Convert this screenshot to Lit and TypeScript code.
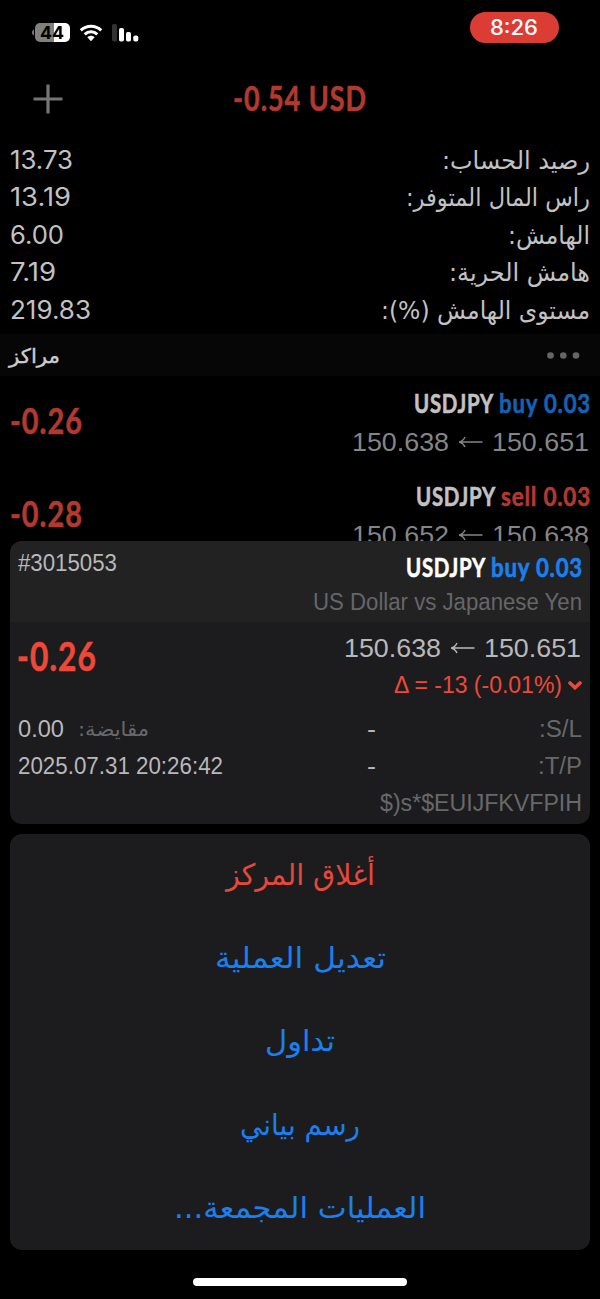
import { LitElement, html, css, svg } from "lit";
import { customElement, property } from "lit/decorators.js";

/** One line of text whose glyphs are condensed or widened to fill `w` pixels. */
@customElement("fit-text")
class FitText extends LitElement {
  @property({ type: Number }) w = 0;
  @property() text = "";

  static styles = css`
    :host { display: block; flex: none; direction: ltr; text-align: left; white-space: nowrap; }
    .ink { display: inline-block; transform-origin: 0 50%; vertical-align: top; }
  `;

  updated() {
    const ink = this.renderRoot.querySelector(".ink") as HTMLElement;
    this.style.width = `${this.w}px`;
    const fit = () => {
      ink.style.transform = "none";
      const natural = ink.getBoundingClientRect().width;
      if (natural) ink.style.transform = `scaleX(${this.w / natural})`;
    };
    fit();
    document.fonts?.ready.then(fit);
  }

  render() {
    const rtl = /[\u0600-\u06ff]/.test(this.text);
    return html`<span class="ink" dir=${rtl ? "rtl" : "ltr"}>${this.text}</span>`;
  }
}

const t = (cls: string, w: number, text: string) =>
  html`<fit-text class=${cls} .w=${w} .text=${text}></fit-text>`;

const arrow = html`<svg class="arrow" width="25" height="12" viewBox="0 0 25 12">
  ${svg`<path d="M24.500 6H1.5M7 1C5.8 3.6 4 5.3 1.2 6C4 6.7 5.8 8.4 7 11" fill="none" stroke="currentColor" stroke-width="1.4"/>`}
</svg>`;

const summary: [string, number, string, number][] = [
  ["13.73", 63, "رصيد الحساب:", 148],
  ["13.19", 61, "راس المال المتوفر:", 184],
  ["6.00", 54, "الهامش:", 82],
  ["7.19", 46, "هامش الحرية:", 141],
  ["219.83", 81, "مستوى الهامش (%):", 209],
];

const positions = [
  { profit: "-0.26", side: "buy", sideW: 92, from: "150.651", to: "150.638" },
  { profit: "-0.28", side: "sell", sideW: 90, from: "150.638", to: "150.652" },
];

const actions: [string, number, string][] = [
  ["أغلاق المركز", 149, "danger"],
  ["تعديل العملية", 171, ""],
  ["تداول", 70, ""],
  ["رسم بياني", 120, ""],
  ["العمليات المجمعة...", 252, ""],
];

@customElement("app-root")
class AppRoot extends LitElement {
  static styles = css`
    :host {
      display: flex; flex-direction: column; width: 600px; height: 1299px; overflow: hidden;
      background: #000; color: #c2c2c2;
      font-family: "Liberation Sans", "DejaVu Sans", sans-serif;
    }
    * { box-sizing: border-box; }
    svg { display: block; flex: none; }
    .status { display: flex; justify-content: space-between; align-items: flex-start; height: 56px; padding: 0 41.5px 0 32px; }
    .indicators { display: flex; align-items: center; padding-top: 23px; }
    .wifi { margin-left: 9px; }
    .signal { margin-left: 9px; }
    .battery { font: 700 18px "Inter", sans-serif; }
    .clock { display: flex; align-items: center; justify-content: center; margin-top: 12px; width: 88.5px; height: 31px; border-radius: 16px; background: #db3d35; color: #fff; }
    .time { font: 500 21px/31px "Inter", sans-serif; }
    .title { display: grid; grid-template-columns: 1fr auto 1fr; align-items: center; height: 86px; padding: 0 33px 4px; }
    .plus { padding-top: 4px; }
    .cond { font-family: "Lato", sans-serif; font-weight: 700; letter-spacing: .035em; -webkit-text-stroke: .6px currentColor; }
    .total { font-size: 35px; line-height: 48px; color: #b3392f; }
    .summary { height: 192px; padding: 0 10px; }
    .line { display: flex; justify-content: space-between; height: 37.4px; }
    .num { font: 400 25px/37.8px "Inter", sans-serif; }
    .ar { font-family: "DejaVu Sans", sans-serif; font-size: 24.5px; line-height: 37.4px; }
    .strip { display: flex; justify-content: space-between; align-items: center; height: 42px; padding: 0 20px 0 9px; background: #060606; color: #ccc; }
    .strip svg { margin-top: 2px; }
    .section { margin-top: 3px; font-size: 20px; -webkit-text-stroke: .4px currentColor; }
    .list { height: 165px; }
    .position { display: flex; justify-content: space-between; height: 92.7px; padding: 0 10px; }
    .profit { margin-top: 24px; font-size: 37px; line-height: 40px; color: #b3392f; }
    .right { display: flex; flex-direction: column; align-items: flex-end; }
    .position .right { padding-top: 6px; }
    .pair { display: flex; gap: 5px; margin-right: -1px; font-size: 26px; line-height: 42px; }
    .position .pair { height: 40px; }
    .buy { color: #1562b5; }
    .sell { color: #b3392f; }
    .prices { display: flex; align-items: center; gap: 9px; font-size: 26px; line-height: 40px; color: #858585; }
    .position .prices { padding-right: 1px; }
    .card { position: relative; margin: 0 10px; height: 283px; flex: none; border-radius: 12px; background: #1c1c1e; overflow: hidden; color: #b8b8ba; font-size: 23px; }
    .head { display: flex; justify-content: space-between; height: 81px; padding: 8px 8px 0; background: #222223; }
    .head .pair { height: 36px; line-height: 37px; color: #fff; }
    .card .buy { color: #1a80f0; }
    .ticket { line-height: 29px; }
    .desc { line-height: 34px; color: #666668; }
    .body { display: grid; grid-template-columns: 1fr auto; padding: 7.5px 8px 0; line-height: 37px; }
    .card .profit { margin: 6px 0 0 -1px; height: 40px; font-size: 40px; color: #ee4938; }
    .card .prices { line-height: 37px; color: #b8b8ba; padding-right: 1px; }
    .delta { display: flex; align-items: center; gap: 6px; color: #ee4938; }
    .facts { grid-column: 1 / 3; display: grid; grid-template-columns: 349px 1fr; padding-top: 7.5px; }
    .cell { display: flex; align-items: center; height: 37px; }
    .cell.end { justify-content: space-between; }
    .cell.only { grid-column: 1 / 3; justify-content: flex-end; }
    .swap { margin-left: 14px; font-size: 20px; line-height: 37px; }
    .muted { color: #68686a; }
    .menu { margin: 10px 10px 0; height: 416px; flex: none; border-radius: 12px; background: #1c1c1e; }
    .action { display: flex; justify-content: center; align-items: center; height: 83.2px; color: #1a80f0; }
    .action.danger { color: #e8483a; }
    .label { font-size: 29.5px; line-height: 83.2px; }
    .home { margin: 28px auto 0; width: 214px; height: 8px; flex: none; border-radius: 4px; background: #fff; }
  `;

  render() {
    return html`
      <div class="status">
        <div class="indicators">
          <svg class="battery" width="38" height="19" viewBox="0 0 38 19">
            <path d="M2 6.5C.7 7 0 8.2 0 9.5s.7 2.500 2 3z" fill="#777" />
            <path d="M8 0H22V19H8a5 5 0 0 1-5-5V5a5 5 0 0 1 5-5z" fill="#808080" />
            <path d="M22 0h11a5 5 0 0 1 5 5v9a5 5 0 0 1-5 5H22z" fill="#fff" />
            <text x="20" y="16" text-anchor="middle" textLength="24" lengthAdjust="spacingAndGlyphs" fill="#000">44</text>
          </svg>
          <svg class="wifi" width="24" height="18" viewBox="0 0 24 18">
            <path d="M1.800 6.300C7.500.8 16.500.8 22.200 6.300M5.700 10.300C9.300 6.900 14.700 6.900 18.300 10.300" fill="none" stroke="#fff" stroke-width="3" />
            <path d="M8.300 13.300C10.400 11.300 13.600 11.300 15.700 13.300L12 17.300z" fill="#fff" />
          </svg>
          <svg class="signal" width="27" height="18" viewBox="0 0 27 18">
            <rect x="0" y="0" width="5" height="17.500" rx="1.800" fill="#333" />
            <rect x="7" y="4" width="5" height="13.500" rx="1.800" fill="#fff" />
            <rect x="14" y="8" width="5" height="9.500" rx="1.800" fill="#fff" />
            <rect x="21.300" y="11.500" width="5" height="6" rx="1.800" fill="#fff" />
          </svg>
        </div>
        <div class="clock">${t("time", 48, "8:26")}</div>
      </div>

      <div class="title">
        <svg class="plus" width="30" height="34" viewBox="0 0 30 30">
          <path d="M15 .5V29.500M.5 15H29.500" stroke="#757575" stroke-width="3.200" />
        </svg>
        ${t("cond total", 134, "-0.54 USD")}
      </div>

      <div class="summary">
        ${summary.map(([v, vw, l, lw]) => html`<div class="line">${t("num", vw, v)}${t("ar", lw, l)}</div>`)}
      </div>

      <div class="strip">
        ${t("ar section", 51, "مراكز")}
        <svg width="33" height="8" viewBox="0 0 33 8" fill="#666">
          <circle cx="3.500" cy="3.500" r="3.300" /><circle cx="16.300" cy="3.500" r="3.300" /><circle cx="29" cy="3.500" r="3.300" />
        </svg>
      </div>

      <div class="list">
        ${positions.map((p) => html`
          <div class="position">
            ${t("cond profit", 73, p.profit)}
            <div class="right">
              <div class="pair">${t("cond", 80, "USDJPY")}${t("cond " + p.side, p.sideW, p.side + " 0.03")}</div>
              <div class="prices">${t("", 97, p.to)}${arrow}${t("", 97, p.from)}</div>
            </div>
          </div>`)}
      </div>

      <div class="card">
        <div class="head">
          ${t("ticket", 99, "#3015053")}
          <div class="right">
            <div class="pair">${t("cond", 80, "USDJPY")}${t("cond buy", 92, "buy 0.03")}</div>
            ${t("desc", 269, "US Dollar vs Japanese Yen")}
          </div>
        </div>
        <div class="body">
          ${t("cond profit", 80, "-0.26")}
          <div class="right">
            <div class="prices">${t("", 97, "150.638")}${arrow}${t("", 97, "150.651")}</div>
            <div class="delta">
              ${t("", 168, "Δ = -13 (-0.01%)")}
              <svg width="14" height="10" viewBox="0 0 14 10"><path d="M2 3L7 7.700L12 3" fill="none" stroke="currentColor" stroke-width="3.600" stroke-linecap="round" /></svg>
            </div>
          </div>
          <div class="facts">
            <div class="cell">${t("", 46, "0.00")}${t("ar swap muted", 71, "مقايضة:")}</div>
            <div class="cell end">${t("", 9, "-")}${t("muted", 43, ":S/L")}</div>
            <div class="cell">${t("", 205, "2025.07.31 20:26:42")}</div>
            <div class="cell end">${t("", 9, "-")}${t("muted", 44, ":T/P")}</div>
            <div class="cell only">${t("muted", 202, "$)s*$EUIJFKVFPIH")}</div>
          </div>
        </div>
      </div>

      <div class="menu">
        ${actions.map(([l, w, c]) => html`<div class="action ${c}">${t("ar label", w, l)}</div>`)}
      </div>
      <div class="home"></div>
    `;
  }
}
